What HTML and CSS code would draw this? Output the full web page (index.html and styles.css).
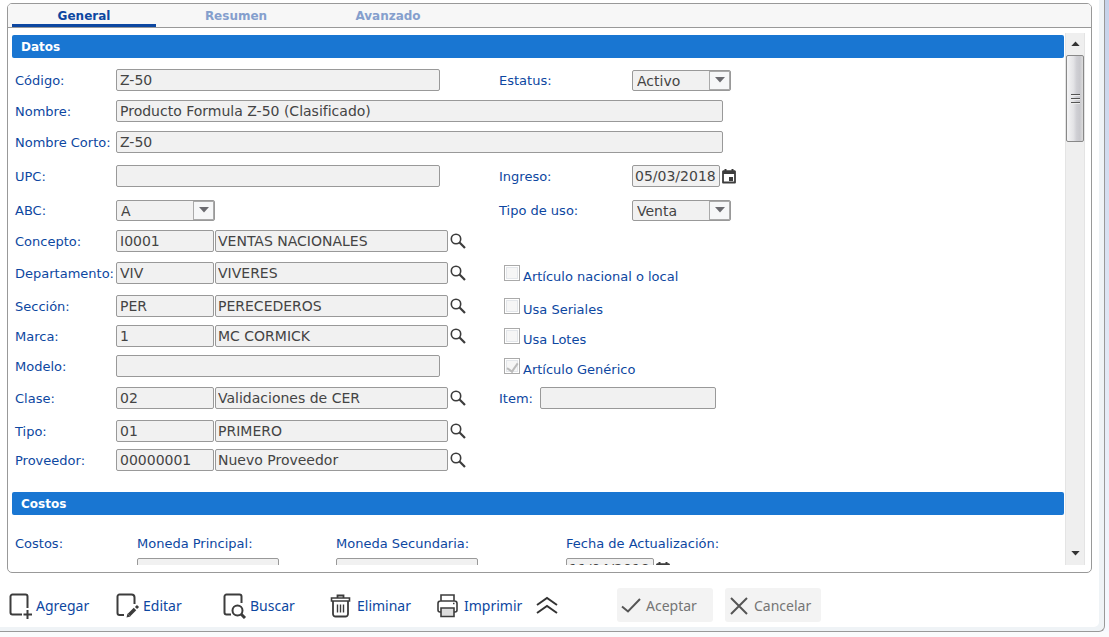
FILE: index.html
```
<!DOCTYPE html>
<html lang="es">
<head>
<meta charset="utf-8">
<title>Producto</title>
<link rel="stylesheet" href="styles.css">
</head>
<body>
<svg class="sprite" aria-hidden="true">
  <symbol id="search" viewBox="0 0 16 16"><circle cx="6" cy="6" r="4.7" fill="none" stroke="currentColor" stroke-width="1.6"/><path d="M9.3 9.3 15 15" stroke="currentColor" stroke-width="2.2"/></symbol>
  <symbol id="calendar" viewBox="0 0 14 16"><path d="M1 3.5h12v11H1z" fill="none" stroke="currentColor" stroke-width="1.8" stroke-linejoin="round"/><path d="M1 2.5h12V6H1zM2.5 1h2v2h-2zM9.500 1h2v2h-2zM7 9h4v4H7z" fill="currentColor"/></symbol>
  <symbol id="down" viewBox="0 0 10 6"><path d="M0 0h10L5 5.500z" fill="currentColor"/></symbol>
</svg>
<main class="window">
  <section class="panel">
    <nav class="tabs" role="tablist">
      <button class="tab active" role="tab" aria-selected="true">General</button>
      <button class="tab" role="tab">Resumen</button>
      <button class="tab" role="tab">Avanzado</button>
    </nav>
    <div class="body">
      <div class="content">
        <h2 class="bar">Datos</h2>
        <div class="fields">
          <label for="codigo">Código:</label>
          <input class="box medium" id="codigo" value="Z-50" readonly>
          <label for="estatus">Estatus:</label>
          <span class="combo"><select id="estatus"><option>Activo</option></select><span class="arrow"><svg><use href="#down"/></svg></span></span>

          <label for="nombre">Nombre:</label>
          <input class="box wide" id="nombre" value="Producto Formula Z-50 (Clasificado)" readonly>

          <label for="corto">Nombre Corto:</label>
          <input class="box wide" id="corto" value="Z-50" readonly>

          <label for="upc">UPC:</label>
          <input class="box medium" id="upc" readonly>
          <label for="ingreso">Ingreso:</label>
          <span class="date"><input class="box" id="ingreso" value="05/03/2018" readonly><button class="icon" aria-label="Calendario"><svg class="cal"><use href="#calendar"/></svg></button></span>

          <label for="abc">ABC:</label>
          <span class="combo"><select id="abc"><option>A</option></select><span class="arrow"><svg><use href="#down"/></svg></span></span>
          <label for="uso">Tipo de uso:</label>
          <span class="combo"><select id="uso"><option>Venta</option></select><span class="arrow"><svg><use href="#down"/></svg></span></span>

          <label for="concepto">Concepto:</label>
          <span class="lookup"><input class="box" id="concepto" value="I0001" readonly><input class="box" aria-label="Descripción del concepto" value="VENTAS NACIONALES" readonly><button class="icon" aria-label="Buscar concepto"><svg><use href="#search"/></svg></button></span>
          <span class="rest"></span>

          <label for="depto">Departamento:</label>
          <span class="lookup"><input class="box" id="depto" value="VIV" readonly><input class="box" aria-label="Descripción del departamento" value="VIVERES" readonly><button class="icon" aria-label="Buscar departamento"><svg><use href="#search"/></svg></button></span>
          <label class="check"><input type="checkbox" disabled><span>Artículo nacional o local</span></label>

          <label for="seccion">Sección:</label>
          <span class="lookup"><input class="box" id="seccion" value="PER" readonly><input class="box" aria-label="Descripción de la sección" value="PERECEDEROS" readonly><button class="icon" aria-label="Buscar sección"><svg><use href="#search"/></svg></button></span>
          <label class="check"><input type="checkbox" disabled><span>Usa Seriales</span></label>

          <label for="marca">Marca:</label>
          <span class="lookup"><input class="box" id="marca" value="1" readonly><input class="box" aria-label="Descripción de la marca" value="MC CORMICK" readonly><button class="icon" aria-label="Buscar marca"><svg><use href="#search"/></svg></button></span>
          <label class="check"><input type="checkbox" disabled><span>Usa Lotes</span></label>

          <label for="modelo">Modelo:</label>
          <input class="box medium" id="modelo" readonly>
          <label class="check"><input type="checkbox" checked disabled><span>Artículo Genérico</span></label>

          <label for="clase">Clase:</label>
          <span class="lookup"><input class="box" id="clase" value="02" readonly><input class="box" aria-label="Descripción de la clase" value="Validaciones de CER" readonly><button class="icon" aria-label="Buscar clase"><svg><use href="#search"/></svg></button></span>
          <span class="item"><label for="item">Item:</label><input class="box" id="item" readonly></span>

          <label for="tipo">Tipo:</label>
          <span class="lookup"><input class="box" id="tipo" value="01" readonly><input class="box" aria-label="Descripción del tipo" value="PRIMERO" readonly><button class="icon" aria-label="Buscar tipo"><svg><use href="#search"/></svg></button></span>
          <span class="rest"></span>

          <label for="proveedor">Proveedor:</label>
          <span class="lookup"><input class="box" id="proveedor" value="00000001" readonly><input class="box" aria-label="Nombre del proveedor" value="Nuevo Proveedor" readonly><button class="icon" aria-label="Buscar proveedor"><svg><use href="#search"/></svg></button></span>
        </div>

        <h2 class="bar">Costos</h2>
        <div class="costs">
          <span>Costos:</span><span>Moneda Principal:</span><span>Moneda Secundaria:</span><span>Fecha de Actualización:</span>
          <label for="promedio">Promedio:</label>
          <input class="box" id="promedio" readonly>
          <input class="box" aria-label="Promedio en moneda secundaria" readonly>
          <span class="date"><input class="box" aria-label="Fecha de actualización" value="11/04/2018" readonly><button class="icon" aria-label="Calendario"><svg class="cal"><use href="#calendar"/></svg></button></span>
        </div>
      </div>
      <div class="scroll" aria-hidden="true">
        <svg class="up"><use href="#down"/></svg>
        <div class="thumb"><i></i><i></i><i></i></div>
        <svg class="dn"><use href="#down"/></svg>
      </div>
    </div>
  </section>
  <footer class="toolbar">
    <button class="tool"><svg viewBox="0 0 24 26"><path d="M13 21.500H3.500a2 2 0 0 1-2-2v-16a2 2 0 0 1 2-2h13a2 2 0 0 1 2 2V15M18.500 17v9M14.500 21.500h8.500"/></svg>Agregar</button>
    <button class="tool"><svg viewBox="0 0 24 26"><path d="M8 22H3.500a2 2 0 0 1-2-2V3.500a2 2 0 0 1 2-2h12a3 3 0 0 1 3 3V11"/><path d="M13 22l6-6" stroke-width="3.500"/><path d="M20 15l2-2" stroke-width="3"/><path d="M10.500 24.500l1-4 3 3z" fill="currentColor" stroke="none"/></svg>Editar</button>
    <button class="tool"><svg viewBox="0 0 24 26"><path d="M8 21.500H3.500a2 2 0 0 1-2-2v-16a2 2 0 0 1 2-2h13a2 2 0 0 1 2 2V10"/><circle cx="14.500" cy="17.500" r="5"/><path d="M18 21l4 4" stroke-width="3"/></svg>Buscar</button>
    <button class="tool"><svg viewBox="0 0 24 26"><path d="M7.500 5V2.500h6V5" stroke-width="1.800"/><path d="M1.500 5h18v3h-18z" stroke-width="1.600"/><path d="M3 8v13a2.500 2.500 0 0 0 2.500 2.500h10A2.500 2.500 0 0 0 18 21V8" stroke-width="1.800"/><path d="M7.500 11.500v8M10.500 11.500v8M13.500 11.500v8" stroke-width="1.400"/></svg>Eliminar</button>
    <button class="tool"><svg viewBox="0 0 24 26"><path d="M4 8V2h13v6M4 19H3a2 2 0 0 1-2-2v-6.500a2.500 2.500 0 0 1 2.500-2.500h14a2.500 2.500 0 0 1 2.500 2.500V17a2 2 0 0 1-2 2h-1" stroke-width="1.600"/><path d="M4 15h13v8.500H4z" stroke-width="1.600" fill="#ddd"/><path d="M16 10.500h1.500" stroke-width="1.500"/></svg>Imprimir</button>
    <button class="more" aria-label="Más opciones"><svg viewBox="0 0 22 18"><path d="M1 9l10-7 10 7M1 17l10-7 10 7"/></svg></button>
    <button class="action"><svg viewBox="0 0 20 18"><path d="M1 9.500l6 5L19 2"/></svg>Aceptar</button>
    <button class="action"><svg viewBox="0 0 20 18"><path d="M2 1l16 16M18 1L2 17"/></svg>Cancelar</button>
  </footer>
</main>
</body>
</html>
```
FILE: styles.css
```
* { box-sizing: border-box; }
body {
  margin: 0;
  height: 100vh;
  display: flex;
  background: linear-gradient(#c6d2ea, #f8faff);
  border-bottom: 5px solid #fafbfc;
  font: 13px/16px "DejaVu Sans", sans-serif;
  color: #0d47a1;
}
button, input, select { font: inherit; color: inherit; }
button { border: 0; padding: 0; background: none; }
svg { fill: none; stroke: none; }
.sprite { position: absolute; width: 0; height: 0; }

.window {
  flex: 1;
  display: flex;
  flex-direction: column;
  min-width: 0;
  margin-right: 4px;
  padding: 3px 12px 9px 7px;
  background: #fff;
  border-right: 1px solid #999;
  border-bottom: 1px solid #999;
  border-radius: 0 0 6px 0;
  box-shadow: inset -5px -4px #eff3f6;
}
.panel {
  flex: 1;
  min-height: 0;
  display: flex;
  flex-direction: column;
  border: 1px solid #999;
  border-radius: 5px;
  overflow: hidden;
}
.tabs {
  display: flex;
  gap: 8px;
  height: 24px;
  padding-left: 4px;
  background: #f7f7f7;
  border-bottom: 1px solid #999;
}
.tab {
  width: 144px;
  padding-top: 3px;
  border-bottom: 3px solid transparent;
  font: bold 12px/16px "DejaVu Sans", sans-serif;
  color: #859fcd;
}
.tab.active { color: #0d47a1; border-bottom-color: #0d47a1; }

.body { flex: 1; display: flex; min-height: 0; padding: 5px 6px 7px 4px; }
.content { flex: 1; min-width: 0; overflow: hidden; padding-top: 2px; }
.bar {
  margin: 0;
  padding: 1px 9px 0;
  background: #1976d2;
  border-radius: 2px;
  color: #fff;
  font: bold 12px/22px "DejaVu Sans", sans-serif;
}
.fields {
  display: grid;
  grid-template-columns: 101px 383px 133px 1fr;
  grid-template-rows: 30px 32px 30px 38px 30px 32px 32px 34px 26px 34px 30px 36px 22px;
  align-items: center;
  padding: 7px 0 21px 3px;
  white-space: nowrap;
}
label, .costs > span { padding-top: 2px; }
.box {
  min-width: 0;
  height: 22px;
  padding: 0 3px;
  border: 1px solid #999;
  border-radius: 2px;
  background: #f1f1f1;
  color: #444;
  font-size: 14px;
}
.lookup .box + .box { padding: 0 2px; }
.medium { width: 324px; }
.wide { grid-column: 2 / -1; width: 607px; }
.rest { grid-column: 3 / -1; }
.combo {
  display: flex;
  width: 99px;
  height: 21px;
  border: 1px solid #999;
  border-radius: 2px;
  background: #f1f1f1;
  color: #444;
}
.combo select {
  flex: 1;
  min-width: 0;
  appearance: none;
  border: 0;
  padding: 1px 4px 0;
  background: none;
  font-size: 14px;
}
.arrow {
  display: grid;
  place-items: center;
  width: 21px;
  border: 1px solid #aaa;
  background: #f6f7f8;
  color: #6b6b70;
}
.arrow svg { width: 10px; height: 6px; }
.lookup { display: grid; grid-template-columns: 98px 233px 18px; gap: 1px; }
.icon { display: grid; place-items: center; color: #3c3c3c; }
.icon svg { width: 16px; height: 16px; }
.icon .cal { width: 14px; }
.date { display: flex; gap: 2px; }
.date .box { width: 88px; padding: 0 2px; }
.check { grid-column: 3 / -1; display: flex; gap: 3px; padding: 4px 0 0 5px; }
.check span { padding-top: 4px; }
.check input {
  appearance: none;
  display: grid;
  place-items: center;
  width: 16px;
  height: 16px;
  margin: 0;
  border: 1px solid #aaa;
  background: #f6f6f6;
  box-shadow: inset 0 0 0 1px #fff, inset 0 0 0 2px #e3e6ea;
}
.check input:checked::after {
  content: "";
  width: 5px;
  height: 9px;
  border: solid #bbb;
  border-width: 0 2px 2px 0;
  transform: rotate(35deg);
}
.item { grid-column: 3 / -1; display: grid; grid-template-columns: 41px 176px; align-items: center; }
.costs {
  display: grid;
  grid-template-columns: 122px 199px 230px 1fr;
  grid-template-rows: 30px 22px;
  align-items: center;
  padding: 13px 0 10px 3px;
  white-space: nowrap;
}
.costs > label { padding-top: 4px; }
.costs > .date { padding-top: 0; }
.costs > .box { width: 142px; }

.scroll {
  display: flex;
  flex-direction: column;
  align-items: center;
  width: 20px;
  margin-left: 1px;
  background: #efefef;
  border-right: 1px solid #e4e4e4;
  border-left: 1px solid #e4e4e4;
  color: #333;
}
.scroll svg { width: 9px; height: 5px; }
.up { margin: 8px 0 9px; transform: rotate(180deg); }
.dn { margin: auto 0 9px; }
.thumb {
  display: flex;
  flex-direction: column;
  align-items: center;
  justify-content: center;
  gap: 2px;
  width: 18px;
  height: 87px;
  border: 1px solid #888;
  border-radius: 2px;
  background: linear-gradient(90deg, #f4f4f5, #e3e3e6 40%, #cfcfd4 60%, #c8c8cd 80%, #ddd);
}
.thumb i { width: 9px; height: 2px; border-top: 1px solid #555; background: #eee; }

.toolbar {
  display: flex;
  height: 49px;
  padding-top: 15px;
  font: 14px/18px "Noto Sans", sans-serif;
}
.tool {
  display: flex;
  align-items: center;
  gap: 3px;
  width: 107px;
  padding: 2px 0 0 2px;
  white-space: nowrap;
}
.tool svg { width: 24px; height: 26px; stroke: #3c3c3c; stroke-width: 2; color: #3c3c3c; }
.more { width: 22px; margin: 0 59px 0 -6px; }
.more svg { width: 22px; height: 18px; stroke: #333; stroke-width: 2; display: block; }
.action {
  display: flex;
  align-items: center;
  gap: 5px;
  width: 96px;
  margin-right: 12px;
  padding: 1px 0 0 4px;
  border-radius: 3px;
  background: #f3f3f3;
  color: #757575;
}
.action svg { width: 20px; height: 18px; stroke: #555; stroke-width: 2; }
```
